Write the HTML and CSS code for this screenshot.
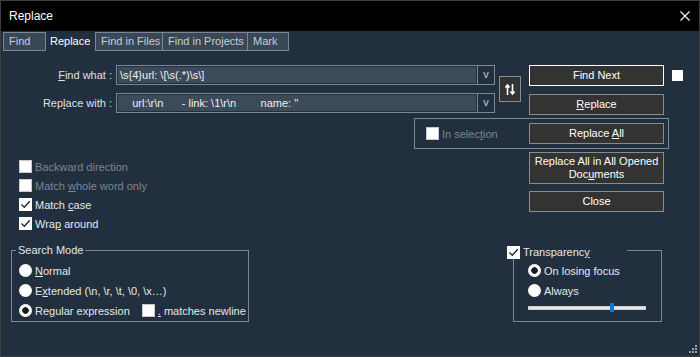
FILE: index.html
```html
<!DOCTYPE html>
<html lang="en">

<head>
  <meta charset="UTF-8">
  <meta name="viewport" content="width=device-width, initial-scale=1.0">
  <title>Replace</title>
  <link rel="stylesheet" href="styles.css">
</head>

<body>
  <div class="window">
    <div class="titlebar">
      <span>Replace</span>
      <svg class="close-x" width="10" height="10" viewBox="0 0 10 10">
        <path d="M0.5 0.5 L9.5 9.5 M9.5 0.5 L0.5 9.5" stroke="#fff" stroke-width="1.1" fill="none" />
      </svg>
    </div>

    <div class="tabs">
      <span class="tab tab-find">Find</span>
      <span class="tab tab-active">Replace</span>
      <span class="tab tab-files">Find in Files</span>
      <span class="tab tab-projects">Find in Projects</span>
      <span class="tab tab-mark">Mark</span>
    </div>

    <div class="top">
      <div class="fields">
        <div class="field-row">
          <span class="field-label"><u>F</u>ind what :</span>
          <div class="combo">
            <span class="combo-text">\s{4}url: \[\s(.*)\s\]</span>
            <span class="combo-drop">v</span>
          </div>
        </div>
        <div class="field-row">
          <span class="field-label">Rep<u>l</u>ace with :</span>
          <div class="combo">
            <span class="combo-text">    url:\r\n      - link: \1\r\n        name: ''</span>
            <span class="combo-drop">v</span>
          </div>
        </div>
      </div>
      <div class="swap">
        <svg width="10" height="11" viewBox="0 0 10 11">
          <path d="M2.5 11 V1.2 M0.4 3.6 L2.5 1 L4.6 3.6" stroke="#fff" stroke-width="1.6" fill="none" />
          <path d="M7.5 0 V9.8 M5.4 7.4 L7.5 10 L9.6 7.4" stroke="#fff" stroke-width="1.6" fill="none" />
        </svg>
      </div>
      <div class="btn-col">
        <button class="btn btn-default">Find Next</button>
        <button class="btn"><u>R</u>eplace</button>
      </div>
      <span class="small-box"></span>
    </div>

    <div class="sel-group">
      <span class="check disabled"><span class="box"></span><span>In selec<u>t</u>ion</span></span>
      <button class="btn btn-right">Replace <u>A</u>ll</button>
    </div>

    <div class="mid">
      <div class="options">
        <span class="check disabled"><span class="box"></span><span>Backward direction</span></span>
        <span class="check disabled"><span class="box"></span><span>Match <u>w</u>hole word only</span></span>
        <span class="check"><span class="box checked"></span><span>Match <u>c</u>ase</span></span>
        <span class="check"><span class="box checked"></span><span>Wra<u>p</u> around</span></span>
      </div>
      <div class="btn-col">
        <button class="btn btn-tall">Replace All in All Opened<br>Doc<u>u</u>ments</button>
        <button class="btn btn-close">Close</button>
      </div>
    </div>

    <div class="bottom">
      <div class="group group-search">
        <div class="group-title">Search Mode</div>
        <div class="radio-list">
          <span class="radio-row"><span class="radio"></span><span><u>N</u>ormal</span></span>
          <span class="radio-row"><span class="radio"></span><span>E<u>x</u>tended (\n, \r, \t, \0, \x…)</span></span>
          <span class="radio-row"><span class="radio selected"></span><span>Re<u>g</u>ular expression</span>
            <span class="check inline"><span class="box"></span><span><u>.</u> matches newline</span></span>
          </span>
        </div>
      </div>

      <div class="group group-trans">
        <div class="group-title trans-title"><span class="box checked"></span><span>Transparenc<u>y</u></span></div>
        <div class="radio-list trans-list">
          <span class="radio-row"><span class="radio selected"></span><span>On losing focus</span></span>
          <span class="radio-row"><span class="radio"></span><span>Always</span></span>
          <div class="slider"><span class="thumb"></span></div>
        </div>
      </div>
    </div>

    <svg class="grip" width="8" height="8" viewBox="0 0 8 8">
      <rect x="6" y="0" width="2" height="2" fill="#9aa4ae" />
      <rect x="3" y="3" width="2" height="2" fill="#9aa4ae" />
      <rect x="6" y="3" width="2" height="2" fill="#9aa4ae" />
      <rect x="0" y="6" width="2" height="2" fill="#9aa4ae" />
      <rect x="3" y="6" width="2" height="2" fill="#9aa4ae" />
      <rect x="6" y="6" width="2" height="2" fill="#9aa4ae" />
    </svg>
  </div>
</body>

</html>
```

FILE: styles.css
```css
* {
  box-sizing: border-box;
}
body {
  margin: 0;
  background: #222f3e;
  font: 11px "Liberation Sans", Arial, sans-serif;
  color: #e4e8ec;
}
u {
  text-decoration-thickness: 1px;
  text-underline-offset: 1px;
}
.window {
  position: relative;
  width: 700px;
  height: 357px;
  border: 1px solid #3e3e3e;
  background: #222f3e;
}
.titlebar {
  height: 30px;
  background: #000;
  color: #fff;
  font-size: 12px;
  display: flex;
  align-items: center;
  justify-content: space-between;
  padding: 0 9px 0 8px;
}

/* tabs */
.tabs {
  display: flex;
  margin: 1px 0 0 2px;
}
.tab {
  height: 19px;
  line-height: 17px;
  border: 1px solid #7b8794;
  background: #3a4757;
  color: #c6cdd5;
  padding-left: 5px;
}
.tab-find {
  width: 43px;
}
.tab-active {
  width: 49px;
  border-color: transparent;
  background: transparent;
  color: #fff;
  padding-left: 3px;
}
.tab-files {
  width: 68px;
}
.tab-projects {
  width: 86px;
  margin-left: -1px;
}
.tab-mark {
  width: 42px;
  margin-left: -1px;
}

/* find / replace fields */
.top {
  display: flex;
  align-items: flex-start;
  margin-top: 14px;
}
.fields {
  width: 494px;
  display: flex;
  flex-direction: column;
  gap: 8px;
}
.field-row {
  display: flex;
  gap: 4px;
}
.field-label {
  width: 111px;
  text-align: right;
  line-height: 20px;
  color: #dde2e7;
}
.combo {
  width: 379px;
  height: 20px;
  border: 1px solid #7b8794;
  padding: 1px 0 1px 1px;
  display: flex;
}
.combo-text {
  flex: 1;
  background: #3c4a5a;
  color: #eef0f2;
  padding-left: 2px;
  line-height: 16px;
  white-space: pre;
  overflow: hidden;
}
.combo-drop {
  width: 17px;
  margin: -1px 0 -1px 1px;
  border-left: 1px solid #7b8794;
  text-align: center;
  line-height: 17px;
  color: #b9c9e0;
}
.swap {
  width: 22px;
  height: 26px;
  margin: 11px 0 0 4px;
  background: #333;
  border: 1px solid #8b8b8b;
  display: flex;
  align-items: center;
  justify-content: center;
}
.btn-col {
  display: flex;
  flex-direction: column;
  gap: 8px;
  margin-left: 8px;
}
.btn {
  width: 135px;
  height: 21px;
  padding: 0;
  background: #333;
  border: 1px solid #8b8b8b;
  color: #fff;
  font: inherit;
  line-height: 13px;
}
.btn-default {
  border-color: #fff;
}
.small-box {
  width: 11px;
  height: 11px;
  margin: 5px 0 0 8px;
  background: #fff;
}

/* in selection */
.sel-group {
  display: flex;
  align-items: center;
  width: 255px;
  height: 31px;
  margin: 3px 0 0 413px;
  border: 1px solid #7b8794;
  padding: 0 4px 0 11px;
}
.btn-right {
  margin-left: auto;
}

/* check boxes */
.check {
  display: flex;
  align-items: center;
  gap: 3px;
  height: 13px;
  white-space: nowrap;
}
.check.disabled {
  color: #7f858c;
}
.box {
  width: 13px;
  height: 13px;
  background: #fff;
  border: 1px solid #c9c9c9;
  flex: none;
}
.box.checked {
  border-color: #fff;
  background: #fff url("data:image/svg+xml,%3Csvg xmlns='http://www.w3.org/2000/svg' width='11' height='11'%3E%3Cpath d='M1.5 5.5 L4.3 8.3 L9.8 2.2' stroke='%23222' stroke-width='1.3' fill='none'/%3E%3C/svg%3E") center / 11px 11px no-repeat;
}

.mid {
  display: flex;
  justify-content: space-between;
  padding: 0 35px 0 18px;
}
.options {
  display: flex;
  flex-direction: column;
  gap: 6px;
  margin-top: 11px;
}
.mid .btn-col {
  margin-top: 3px;
  gap: 7px;
}
.btn-tall {
  height: 32px;
}

/* group boxes */
.bottom {
  display: flex;
  margin-top: 20px;
  padding-left: 10px;
}
.group {
  border: 1px solid #7b8794;
  height: 72px;
}
.group-search {
  width: 238px;
}
.group-title {
  width: fit-content;
  margin: -8px 0 0 4px;
  padding: 0 2px;
  line-height: 15px;
  background: #222f3e;
  color: #e4e8ec;
}
.radio-list {
  display: flex;
  flex-direction: column;
  gap: 7px;
  padding: 6px 0 0 7px;
}
.radio-row {
  display: flex;
  align-items: center;
  gap: 3px;
  height: 13px;
  white-space: nowrap;
}
.radio {
  width: 13px;
  height: 13px;
  border-radius: 50%;
  background: #fff;
  flex: none;
}
.radio.selected {
  background: radial-gradient(circle, #1c1c1c 0 3px, #fff 3.6px);
}
.check.inline {
  margin-left: 9px;
}
.group-trans {
  width: 149px;
  margin-left: 264px;
}
.trans-title {
  display: flex;
  align-items: center;
  gap: 3px;
  width: 120px;
  height: 13px;
  margin: -5px 0 0 -7px;
  padding: 0;
}
.trans-list {
  padding: 5px 0 0 14px;
}
.slider {
  position: relative;
  width: 118px;
  height: 4px;
  margin-top: 2px;
  background: #e6e6e6;
  border: 1px solid #cfcfcf;
}
.thumb {
  position: absolute;
  left: 81px;
  top: -4px;
  width: 4px;
  height: 9px;
  background: #0a78d4;
}
.grip {
  position: absolute;
  right: 2px;
  bottom: 3px;
}
```
